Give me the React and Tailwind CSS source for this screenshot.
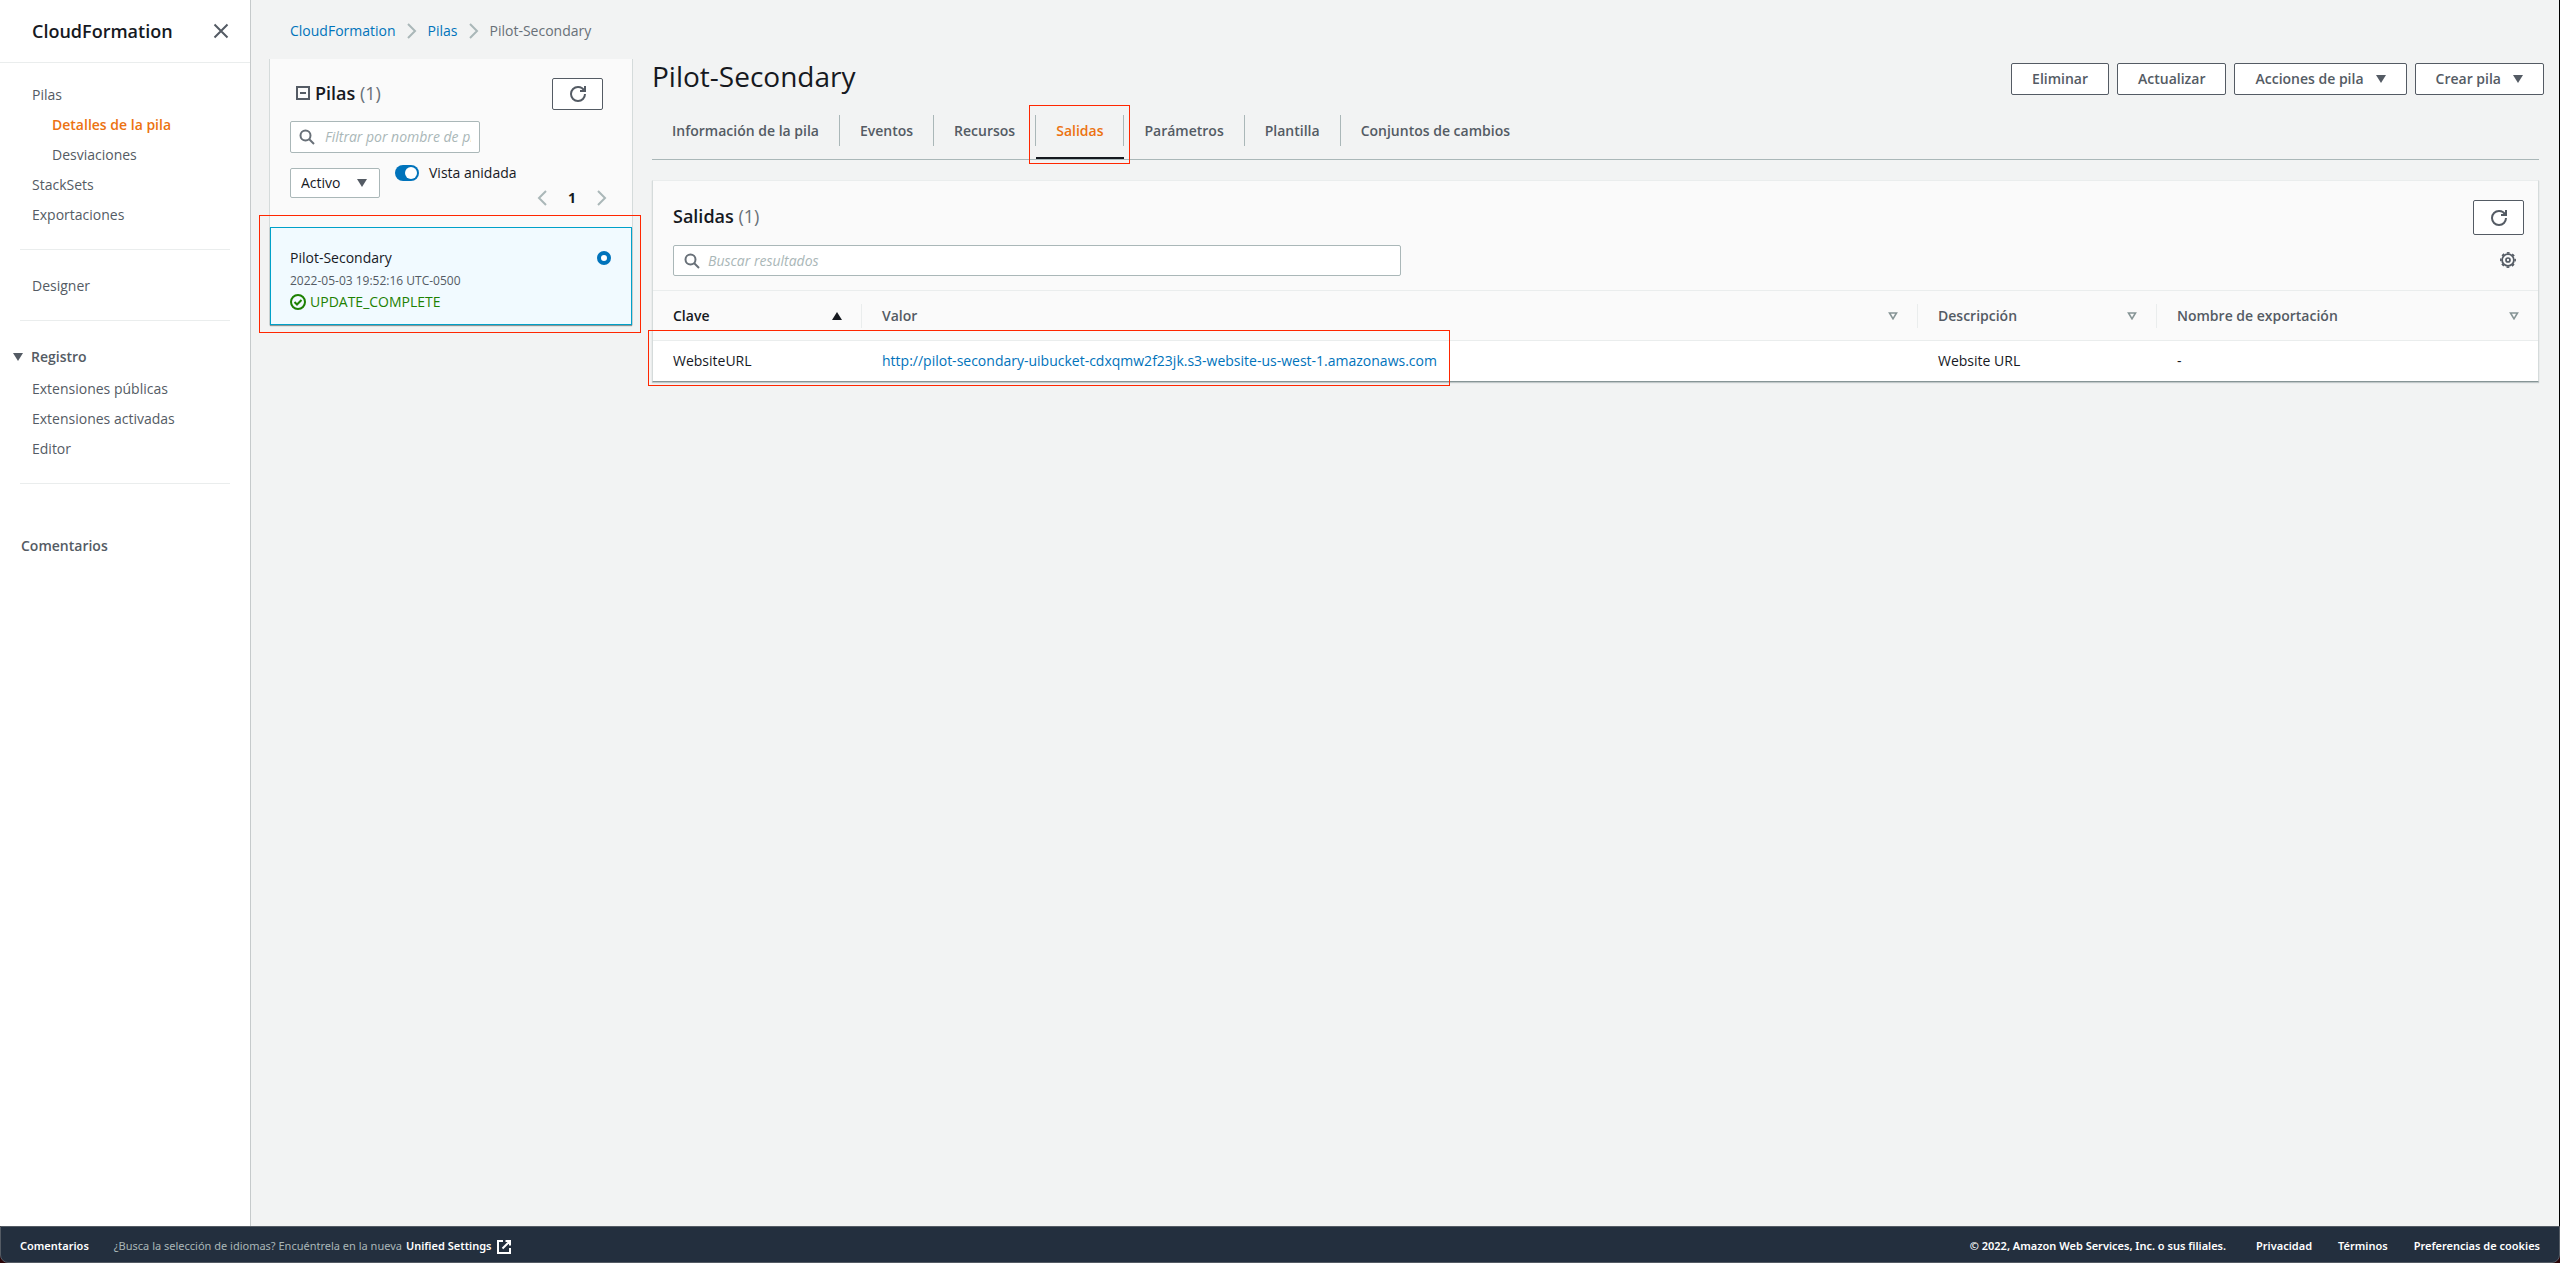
import React from "react";

const link = "text-[#0073bb]";
const iconProps = { viewBox: "0 0 16 16", fill: "none", stroke: "currentColor", strokeWidth: 2 };

function Refresh() {
  return (
    <svg {...iconProps} strokeWidth="2" className="h-4 w-4" aria-hidden="true">
      <path d="M10 5h5V0" />
      <path d="M15 8a6.957 6.957 0 0 1-7 7 6.957 6.957 0 0 1-7-7 6.957 6.957 0 0 1 7-7 6.87 6.87 0 0 1 6.3 4" />
    </svg>
  );
}

function Search() {
  return (
    <svg {...iconProps} className="h-4 w-4 shrink-0 text-[#687078]" aria-hidden="true">
      <circle cx="6.500" cy="6.500" r="5" />
      <path d="m15 15-5-5" />
    </svg>
  );
}

function Chevron({ left = false, className = "h-4 w-4" }) {
  return (
    <svg viewBox="0 0 16 16" fill="none" stroke="#aab7b8" strokeWidth="2" className={className} aria-hidden="true">
      <path d={left ? "M12 1 5 8l7 7" : "m4 1 7 7-7 7"} />
    </svg>
  );
}

function Caret({ className = "" }) {
  return (
    <svg viewBox="0 0 10 8" className={`h-2 w-2.5 shrink-0 ${className}`} fill="currentColor" aria-hidden="true">
      <path d="M0 0h10L5 8z" />
    </svg>
  );
}

function Gear() {
  return (
    <svg viewBox="0 0 16 16" fill="none" stroke="currentColor" className="h-4 w-4" aria-hidden="true">
      <circle cx="8" cy="8" r="5.900" strokeWidth="1.800" />
      <circle cx="8" cy="8" r="7.200" strokeWidth="1.500" strokeDasharray="2.827" strokeDashoffset="1.414" />
      <circle cx="8" cy="8" r="2" strokeWidth="1.700" />
    </svg>
  );
}

function RefreshButton({ className }) {
  return (
    <button type="button" aria-label="Actualizar lista" className={`flex w-[51px] items-center justify-center rounded-xs border border-[#545b64] bg-white text-[#545b64] ${className}`}>
      <Refresh />
    </button>
  );
}

function NavItem({ children, active = false, indent = false }) {
  return (
    <li className={indent ? "pl-5" : ""}>
      <a href="#" aria-current={active ? "page" : undefined} className={`block pt-0.5 leading-7 ${active ? "font-semibold text-[#ec7211]" : "text-[#545b64]"}`}>
        {children}
      </a>
    </li>
  );
}

function Sidebar() {
  return (
    <nav aria-label="CloudFormation" className="w-[251px] shrink-0 border-r border-[#c6cacb] bg-white text-sm">
      <div className="flex h-[63px] items-center justify-between border-b border-[#eaeded] pr-[21px] pl-8">
        <h2 className="text-lg font-semibold text-[#16191f]">CloudFormation</h2>
        <button type="button" aria-label="Cerrar" className="text-[#545b64]">
          <svg {...iconProps} className="h-4 w-4" aria-hidden="true"><path d="m1.500 1.500 13 13M14.500 1.500l-13 13" /></svg>
        </button>
      </div>
      <ul className="pt-4 pl-8">
        <NavItem>Pilas</NavItem>
        <NavItem active indent>Detalles de la pila</NavItem>
        <NavItem indent>Desviaciones</NavItem>
        <NavItem>StackSets</NavItem>
        <NavItem>Exportaciones</NavItem>
      </ul>
      <hr className="mx-5 mt-5 mb-5 border-[#eaeded]" />
      <ul className="pl-8">
        <NavItem>Designer</NavItem>
      </ul>
      <hr className="mx-5 mt-5 mb-5 border-[#eaeded]" />
      <button type="button" aria-expanded="true" className="flex h-8 w-full items-center gap-2 pl-[13px] text-left font-semibold text-[#545b64]">
        <Caret />
        Registro
      </button>
      <ul className="pl-8">
        <NavItem>Extensiones públicas</NavItem>
        <NavItem>Extensiones activadas</NavItem>
        <NavItem>Editor</NavItem>
      </ul>
      <hr className="mx-5 mt-5 mb-[47px] border-[#eaeded]" />
      <a href="#" className="block pl-[21px] leading-[30px] font-semibold text-[#545b64]">Comentarios</a>
    </nav>
  );
}

function Highlight({ className }) {
  return <span aria-hidden="true" className={`pointer-events-none absolute border border-[#ff2600] ${className}`} />;
}

function StackList() {
  return (
    <section aria-label="Pilas" className="mt-[-1px] w-[364px] shrink-0 border-x border-[#d5dbdb] bg-[#fafafa]">
      <div className="h-[168px] pt-[19px] pr-[29px] pl-5">
        <div className="flex items-start justify-between">
          <h2 className="flex items-center gap-[5px] pl-1.5 text-lg leading-[30px] font-semibold text-[#16191f]">
            <svg viewBox="0 0 14 14" fill="none" stroke="#545b64" strokeWidth="2" className="h-3.5 w-3.5" aria-hidden="true"><path d="M1 1h12v12H1zM4 7h6" /></svg>
            <span>Pilas <span className="font-normal text-[#687078]">(1)</span></span>
          </h2>
          <RefreshButton className="h-8" />
        </div>
        <div className="mt-[11px] flex h-8 w-[190px] items-center gap-2.5 rounded-xs border border-[#aab7b8] bg-white pr-2 pl-2">
          <Search />
          <input type="text" aria-label="Filtrar por nombre de pila" placeholder="Filtrar por nombre de pila" className="w-full min-w-0 text-sm placeholder:text-[#aab7b8] placeholder:italic focus:outline-none" />
        </div>
        <div className="mt-3 flex items-start">
          <div className="relative mt-[3px] flex h-[30px] w-[90px] items-center rounded-xs border border-[#aab7b8] bg-white">
            <select aria-label="Estado" className="h-full w-full appearance-none pl-2.5 text-sm text-[#16191f]" defaultValue="Activo">
              <option>Activo</option>
            </select>
            <Caret className="pointer-events-none absolute right-3 text-[#545b64]" />
          </div>
          <label className="ml-[15px] flex items-center gap-2.5 text-sm leading-4 text-[#16191f]">
            <input type="checkbox" role="switch" defaultChecked className="h-4 w-6 appearance-none rounded-full bg-[#0073bb] before:mt-0.5 before:ml-2.5 before:block before:h-3 before:w-3 before:rounded-full before:bg-white" />
            Vista anidada
          </label>
        </div>
        <div className="mt-[-8px] mr-[-7px] flex items-center justify-end gap-[18px] text-sm font-bold text-[#16191f]">
          <button type="button" aria-label="Anterior"><Chevron left /></button>
          <span className="leading-4">1</span>
          <button type="button" aria-label="Siguiente"><Chevron /></button>
        </div>
      </div>
      <div className="relative flex h-[98px] items-start justify-between border border-[#00a1c9] bg-[#f1faff] pt-[18px] pr-5 pl-[19px] shadow-[0_1px_1px_0_#879596]">
        <div>
          <label htmlFor="pilot" className="block text-sm leading-6 text-[#16191f]">Pilot-Secondary</label>
          <p className="text-xs leading-[22px] text-[#545b64]">2022-05-03 19:52:16 UTC-0500</p>
          <p className="flex items-center gap-1 text-sm leading-5 text-[#1d8102]">
            <svg {...iconProps} className="h-4 w-4" aria-hidden="true"><circle cx="8" cy="8" r="7" /><path d="m4.500 8 2.500 2.500 4.500-4.500" /></svg>
            UPDATE_COMPLETE
          </p>
        </div>
        <input id="pilot" type="radio" name="stack" defaultChecked className="mt-[5px] h-3.5 w-3.5 appearance-none rounded-full border-[4px] border-[#0073bb] bg-white" />
        <Highlight className="-top-[13px] -right-[10px] -bottom-[9px] -left-[12px]" />
      </div>
    </section>
  );
}

const tabs = ["Información de la pila", "Eventos", "Recursos", "Salidas", "Parámetros", "Plantilla", "Conjuntos de cambios"];

function Tabs() {
  return (
    <div role="tablist" className="mt-2.5 mr-5 flex h-[55px] border-b border-[#aab7b8] text-sm font-semibold">
      {tabs.map((t, i) => (
        <div key={t} className="relative">
          <button type="button" role="tab" aria-selected={t === "Salidas"} className={`mt-[10px] h-[31px] px-5 ${i < tabs.length - 1 ? "border-r border-[#aab7b8]" : ""} ${t === "Salidas" ? "text-[#ec7211]" : "text-[#545b64]"}`}>
            {t}
          </button>
          {t === "Salidas" && (
            <>
              <span aria-hidden="true" className="absolute inset-x-0 bottom-0 h-0.5 bg-[#16191f]" />
              <Highlight className="top-0 -right-[6px] -bottom-[5px] -left-[7px]" />
            </>
          )}
        </div>
      ))}
    </div>
  );
}

function ActionButton({ children, menu = false }) {
  return (
    <button type="button" className="flex h-8 items-center gap-3 rounded-xs border border-[#545b64] bg-white px-5 text-sm font-semibold text-[#545b64]">
      {children}
      {menu && <Caret />}
    </button>
  );
}

function HeadCell({ children, sorted = false, last = false }) {
  return (
    <th scope="col" aria-sort={sorted ? "ascending" : undefined} className="h-[50px] border-y border-[#eaeded] p-0 text-left font-semibold">
      <div className={`flex h-6 items-center justify-between pl-5 pr-[19px] ${last ? "" : "border-r border-[#eaeded]"} ${sorted ? "text-[#16191f]" : "text-[#545b64]"}`}>
        {children}
        <svg viewBox="0 0 10 8" className="h-2 w-2.5" aria-hidden="true">
          {sorted ? <path d="M0 8h10L5 0z" fill="#16191f" /> : <path d="M1.500 1h7L5 6.800z" fill="none" stroke="#879596" strokeWidth="1.600" />}
        </svg>
      </div>
    </th>
  );
}

function Outputs() {
  return (
    <section aria-label="Salidas" className="mt-5 mr-5 border border-t-[#eaeded] border-r-[#d5dbdb] border-b-[#879596] border-l-[#d5dbdb] bg-[#fafafa] shadow-[0_1px_1px_0_rgba(0,28,36,0.2)]">
      <div className="flex h-[109px] justify-between pt-[19px] pr-3.5 pl-5">
        <div className="min-w-0 flex-1">
          <h2 className="text-lg leading-8 font-semibold text-[#16191f]">Salidas <span className="font-normal text-[#687078]">(1)</span></h2>
          <div className="mt-[13px] flex h-[31px] w-[728px] max-w-full items-center gap-2 rounded-xs border border-[#aab7b8] bg-white px-2.5">
            <Search />
            <input type="text" aria-label="Buscar resultados" placeholder="Buscar resultados" className="w-full text-sm placeholder:text-[#aab7b8] placeholder:italic focus:outline-none" />
          </div>
        </div>
        <div className="flex flex-col items-end gap-[17px]">
          <RefreshButton className="h-[35px]" />
          <button type="button" aria-label="Preferencias" className="mr-2 text-[#545b64]"><Gear /></button>
        </div>
      </div>
      <div className="relative">
        <table className="w-full table-fixed border-collapse text-sm">
          <colgroup>
            <col className="w-[209px]" />
            <col />
            <col className="w-[239px]" />
            <col className="w-[381px]" />
          </colgroup>
          <thead>
            <tr>
              <HeadCell sorted>Clave</HeadCell>
              <HeadCell>Valor</HeadCell>
              <HeadCell>Descripción</HeadCell>
              <HeadCell last>Nombre de exportación</HeadCell>
            </tr>
          </thead>
          <tbody>
            <tr className="h-10 bg-white text-[#16191f]">
              <td className="px-5">WebsiteURL</td>
              <td className="px-5"><a href="#" className={link}>http://pilot-secondary-uibucket-cdxqmw2f23jk.s3-website-us-west-1.amazonaws.com</a></td>
              <td className="px-5">Website URL</td>
              <td className="px-5">-</td>
            </tr>
          </tbody>
        </table>
        <Highlight className="-bottom-[5px] -left-[5px] h-14 w-[802px]" />
      </div>
    </section>
  );
}

function Footer() {
  return (
    <footer className="bg-[#2a0508] font-['Noto_Sans',sans-serif]">
      <div className="flex h-[37px] items-center justify-between rounded-b-lg border border-[#545b64] bg-[#232f3e] px-[19px] pt-1 text-[11px] font-semibold text-white">
        <div className="flex items-center gap-[25px]">
          <a href="#">Comentarios</a>
          <p className="flex items-center gap-1 font-normal text-[#aab7b8]">
            ¿Busca la selección de idiomas? Encuéntrela en la nueva
            <a href="#" className="flex items-center gap-1 font-semibold text-white">
              Unified Settings
              <svg {...iconProps} className="h-4 w-4" aria-hidden="true"><path d="M7 2H2v12h12V9M9.500 2H14v4.500M14 2 6.500 9.500" /></svg>
            </a>
          </p>
        </div>
        <div className="flex items-center gap-[26px]">
          <span className="mr-1">© 2022, Amazon Web Services, Inc. o sus filiales.</span>
          <a href="#">Privacidad</a>
          <a href="#">Términos</a>
          <a href="#">Preferencias de cookies</a>
        </div>
      </div>
    </footer>
  );
}

export default function App() {
  return (
    <div className="flex min-h-screen flex-col bg-[#f2f3f3] font-['Open_Sans','Noto_Sans',sans-serif]">
      <div className="flex flex-1 border-r border-black">
        <Sidebar />
        <main className="min-w-0 flex-1 pl-[18px]">
          <nav aria-label="Ruta" className="flex h-[60px] items-center gap-2 pt-0.5 pl-[21px] text-sm">
            <a href="#" className={link}>CloudFormation</a>
            <Chevron />
            <a href="#" className={link}>Pilas</a>
            <Chevron />
            <span className="text-[#687078]">Pilot-Secondary</span>
          </nav>
          <div className="flex items-start gap-[19px]">
            <StackList />
            <div className="min-w-0 flex-1">
              <div className="flex items-start justify-between pr-[15px]">
                <h1 className="text-[28px] leading-8 text-[#16191f]">Pilot-Secondary</h1>
                <div className="mt-[3px] flex gap-2">
                  <ActionButton>Eliminar</ActionButton>
                  <ActionButton>Actualizar</ActionButton>
                  <ActionButton menu>Acciones de pila</ActionButton>
                  <ActionButton menu>Crear pila</ActionButton>
                </div>
              </div>
              <Tabs />
              <Outputs />
            </div>
          </div>
        </main>
      </div>
      <Footer />
    </div>
  );
}
